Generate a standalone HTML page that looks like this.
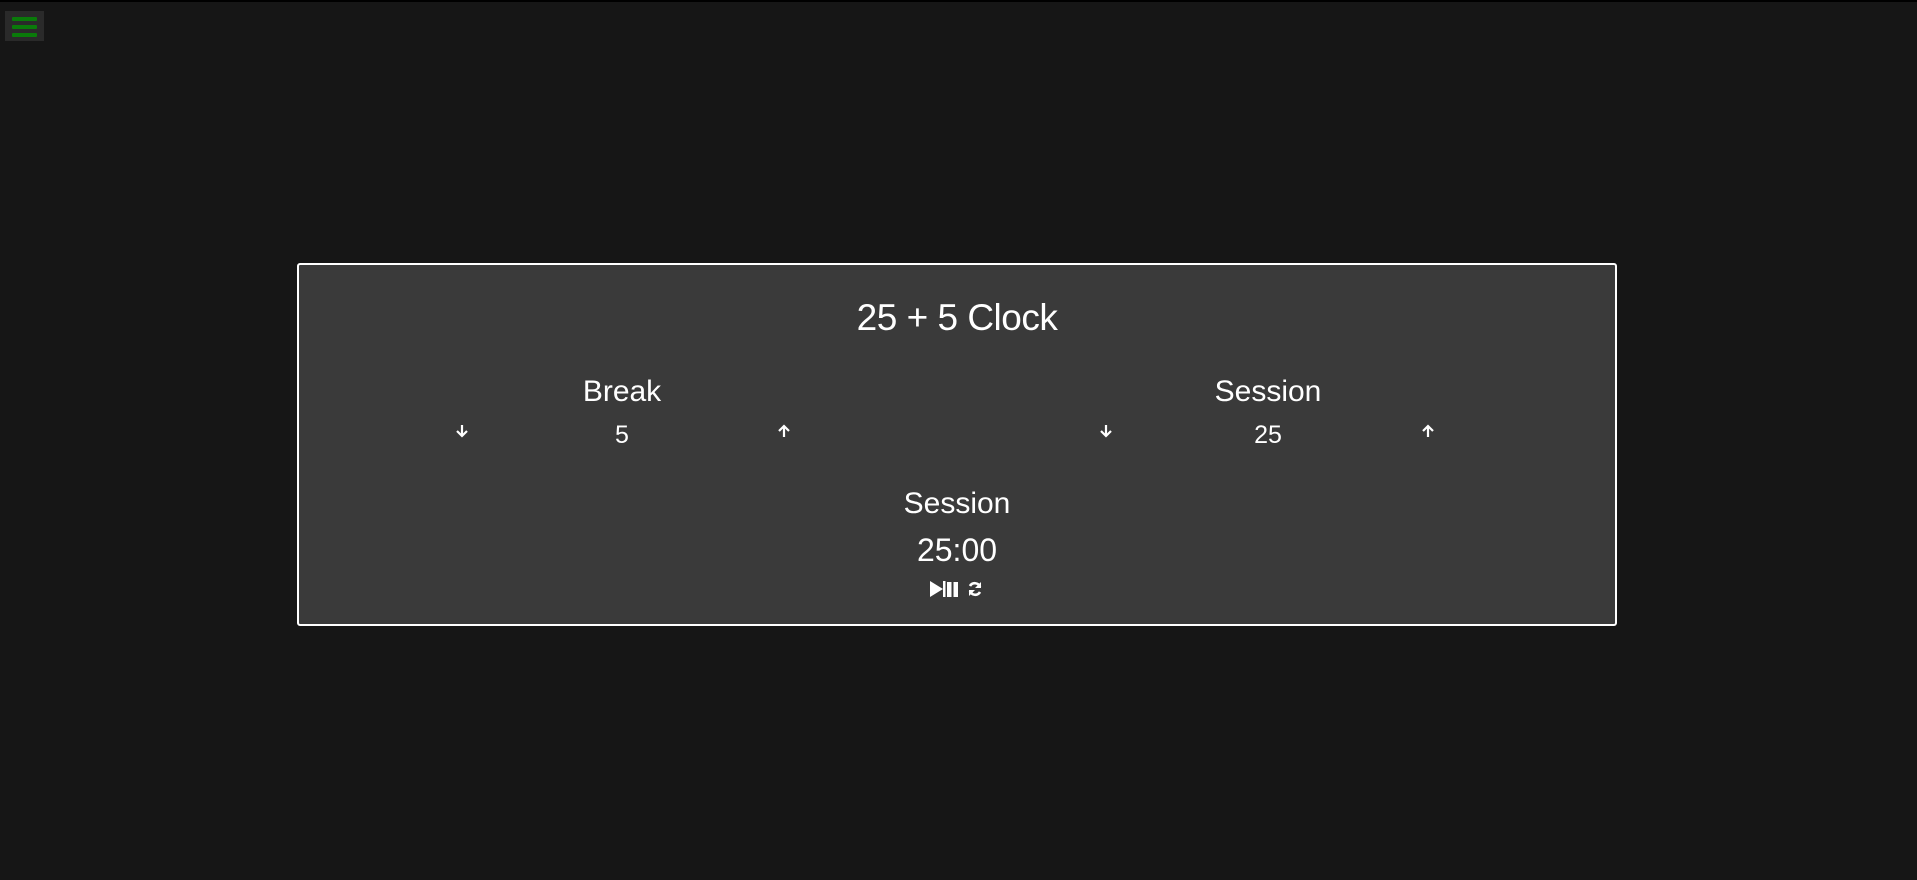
<!DOCTYPE html>
<html><head><meta charset="utf-8"><style>
html,body{margin:0;padding:0;background:#161616;width:1917px;height:880px;overflow:hidden;font-family:"Liberation Sans",sans-serif;color:#fff}
body{border-top:2px solid #000;box-sizing:border-box}
.t{position:absolute;line-height:1;white-space:nowrap;transform:translateX(-50%)}
.box{position:absolute;left:297px;top:263px;width:1320px;height:363px;border:2px solid #fff;border-radius:3px;background:#3a3a3a;box-sizing:border-box}
.ham{position:absolute;left:5px;top:11px;width:39px;height:30px;background:#2a2a2a}
.ham i{position:absolute;left:7px;width:25px;height:4px;background:#0a7a0a;border-radius:1px}
svg{position:absolute}
</style></head><body>
<div class="ham"><i style="top:6px"></i><i style="top:14px"></i><i style="top:22px"></i></div>
<div class="box"></div>
<div class="t" style="left:957px;top:299px;font-size:37px;letter-spacing:-0.5px">25 + 5 Clock</div>
<div class="t" style="left:622px;top:377px;font-size:30px">Break</div>
<div class="t" style="left:1268px;top:377px;font-size:30px">Session</div>
<div class="t" style="left:622px;top:423px;font-size:25px">5</div>
<div class="t" style="left:1268px;top:423px;font-size:25px">25</div>
<div class="t" style="left:957px;top:489px;font-size:30px">Session</div>
<div class="t" style="left:957px;top:534px;font-size:32px">25:00</div>
<svg style="left:455px;top:423px" width="14" height="16" viewBox="0 0 14 16"><path d="M7 2V13M2 8L7 13L12 8" stroke="#fff" stroke-width="2.2" fill="none"/></svg>
<svg style="left:777px;top:423px" width="14" height="16" viewBox="0 0 14 16"><path d="M7 14V3M2 8L7 3L12 8" stroke="#fff" stroke-width="2.2" fill="none"/></svg>
<svg style="left:1099px;top:423px" width="14" height="16" viewBox="0 0 14 16"><path d="M7 2V13M2 8L7 13L12 8" stroke="#fff" stroke-width="2.2" fill="none"/></svg>
<svg style="left:1421px;top:423px" width="14" height="16" viewBox="0 0 14 16"><path d="M7 14V3M2 8L7 3L12 8" stroke="#fff" stroke-width="2.2" fill="none"/></svg>
<svg style="left:930px;top:581px" width="30" height="16" viewBox="0 0 30 16"><path d="M0 0L13 8L0 16Z" fill="#fff"/><rect x="13" y="0" width="2.5" height="16" fill="#fff"/><rect x="17" y="1" width="4.5" height="15" fill="#fff"/><rect x="23.5" y="1" width="4.5" height="15" fill="#fff"/></svg>
<svg style="left:967px;top:581px" width="16" height="16" viewBox="0 0 16 16"><path d="M13 6A5.5 5.5 0 0 0 3 5M3 10A5.5 5.5 0 0 0 13 11" stroke="#fff" stroke-width="2.6" fill="none"/><path d="M14 1V7H8Z" fill="#fff"/><path d="M2 15V9H8Z" fill="#fff"/></svg>
</body></html>
